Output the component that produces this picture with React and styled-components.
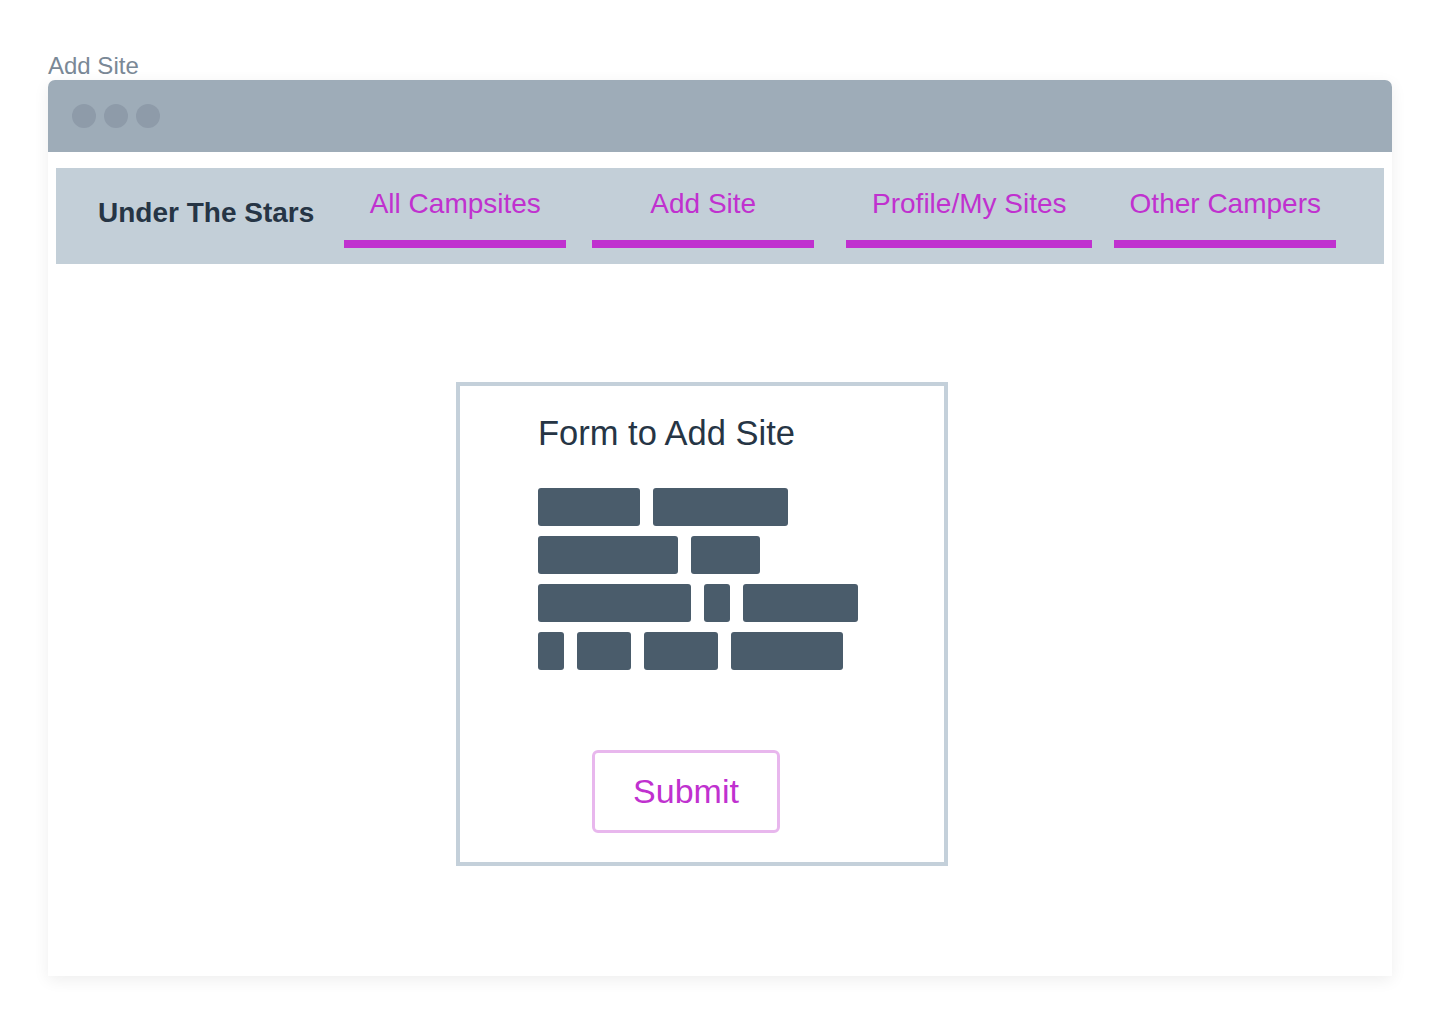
import React from "react";
import styled, { createGlobalStyle } from "styled-components";

const GlobalStyle = createGlobalStyle`
  html, body {
    margin: 0;
    padding: 0;
    background: #ffffff;
  }
  body {
    font-family: "Liberation Sans", Arial, sans-serif;
  }
  * {
    box-sizing: border-box;
  }
`;

const navItems = [
  { label: "All Campsites", width: 222, offset: 30 },
  { label: "Add Site", width: 222, offset: 26 },
  { label: "Profile/My Sites", width: 246, offset: 32 },
  { label: "Other Campers", width: 222, offset: 22 },
];

// widths of the placeholder blocks, row by row
const fieldRows = [
  [102, 135],
  [140, 69],
  [153, 26, 115],
  [26, 54, 74, 112],
];

const App = () => {
  return (
    <>
      <GlobalStyle />
      <Page>
        <PageLabel>Add Site</PageLabel>
        <Window>
          <TitleBar>
            <Dot />
            <Dot />
            <Dot />
          </TitleBar>
          <WindowBody>
            <NavBar>
              <Brand>Under The Stars</Brand>
              {navItems.map((item) => (
                <NavItem key={item.label} $width={item.width} $offset={item.offset}>
                  <NavText>{item.label}</NavText>
                  <NavUnderline />
                </NavItem>
              ))}
            </NavBar>
            <FormCard>
              <FormTitle>Form to Add Site</FormTitle>
              <Fields>
                {fieldRows.map((row, i) => (
                  <FieldRow key={i}>
                    {row.map((w, j) => (
                      <FieldBlock key={j} $width={w} />
                    ))}
                  </FieldRow>
                ))}
              </Fields>
              <SubmitButton type="button">Submit</SubmitButton>
            </FormCard>
          </WindowBody>
        </Window>
      </Page>
    </>
  );
};

export default App;

const Page = styled.div`
  width: 1440px;
  height: 1024px;
  padding: 52px 48px 0 48px;
  display: flex;
  flex-direction: column;
`;

const PageLabel = styled.div`
  font-size: 24px;
  line-height: 28px;
  color: #7a8896;
`;

const Window = styled.div`
  width: 1344px;
  height: 896px;
  background: #ffffff;
  border-radius: 7px 7px 0 0;
  box-shadow: 0 4px 16px rgba(0, 0, 0, 0.07);
  display: flex;
  flex-direction: column;
`;

const TitleBar = styled.div`
  height: 72px;
  background: #9eacb8;
  border-radius: 7px 7px 0 0;
  display: flex;
  align-items: center;
  gap: 8px;
  padding-left: 24px;
`;

const Dot = styled.span`
  width: 24px;
  height: 24px;
  border-radius: 50%;
  background: #8e9ba9;
`;

const WindowBody = styled.div`
  flex: 1;
  padding: 16px 8px 0 8px;
  display: flex;
  flex-direction: column;
`;

const NavBar = styled.nav`
  height: 96px;
  background: #c3cfd8;
  display: flex;
  align-items: flex-start;
  padding: 22px 0 0 42px;
`;

const Brand = styled.div`
  font-size: 28px;
  line-height: 28px;
  font-weight: 700;
  color: #263545;
  margin-top: 9px;
  white-space: nowrap;
`;

const NavItem = styled.div`
  width: ${(p) => p.$width}px;
  margin-left: ${(p) => p.$offset}px;
  display: flex;
  flex-direction: column;
  align-items: center;
`;

const NavText = styled.span`
  font-size: 28px;
  line-height: 28px;
  color: #c031cf;
  white-space: nowrap;
`;

const NavUnderline = styled.span`
  align-self: stretch;
  height: 8px;
  margin-top: 22px;
  background: #c031cf;
`;

const FormCard = styled.div`
  width: 492px;
  height: 484px;
  margin: 118px 0 0 400px;
  border: 4px solid #c4d0da;
  padding: 30px 0 0 78px;
  display: flex;
  flex-direction: column;
  align-items: flex-start;
`;

const FormTitle = styled.h2`
  margin: 0;
  font-size: 34.5px;
  line-height: 34px;
  font-weight: 400;
  color: #263545;
  white-space: nowrap;
`;

const Fields = styled.div`
  margin-top: 38px;
  display: flex;
  flex-direction: column;
  gap: 10px;
`;

const FieldRow = styled.div`
  display: flex;
  gap: 13px;
`;

const FieldBlock = styled.span`
  width: ${(p) => p.$width}px;
  height: 38px;
  border-radius: 3px;
  background: #4a5c6b;
`;

const SubmitButton = styled.button`
  margin: 80px 0 0 54px;
  width: 188px;
  height: 83px;
  border: 3px solid #e8b7ed;
  border-radius: 6px;
  background: #ffffff;
  font-family: "Liberation Sans", Arial, sans-serif;
  font-size: 34px;
  color: #c031cf;
  padding: 0;
  cursor: pointer;
`;
